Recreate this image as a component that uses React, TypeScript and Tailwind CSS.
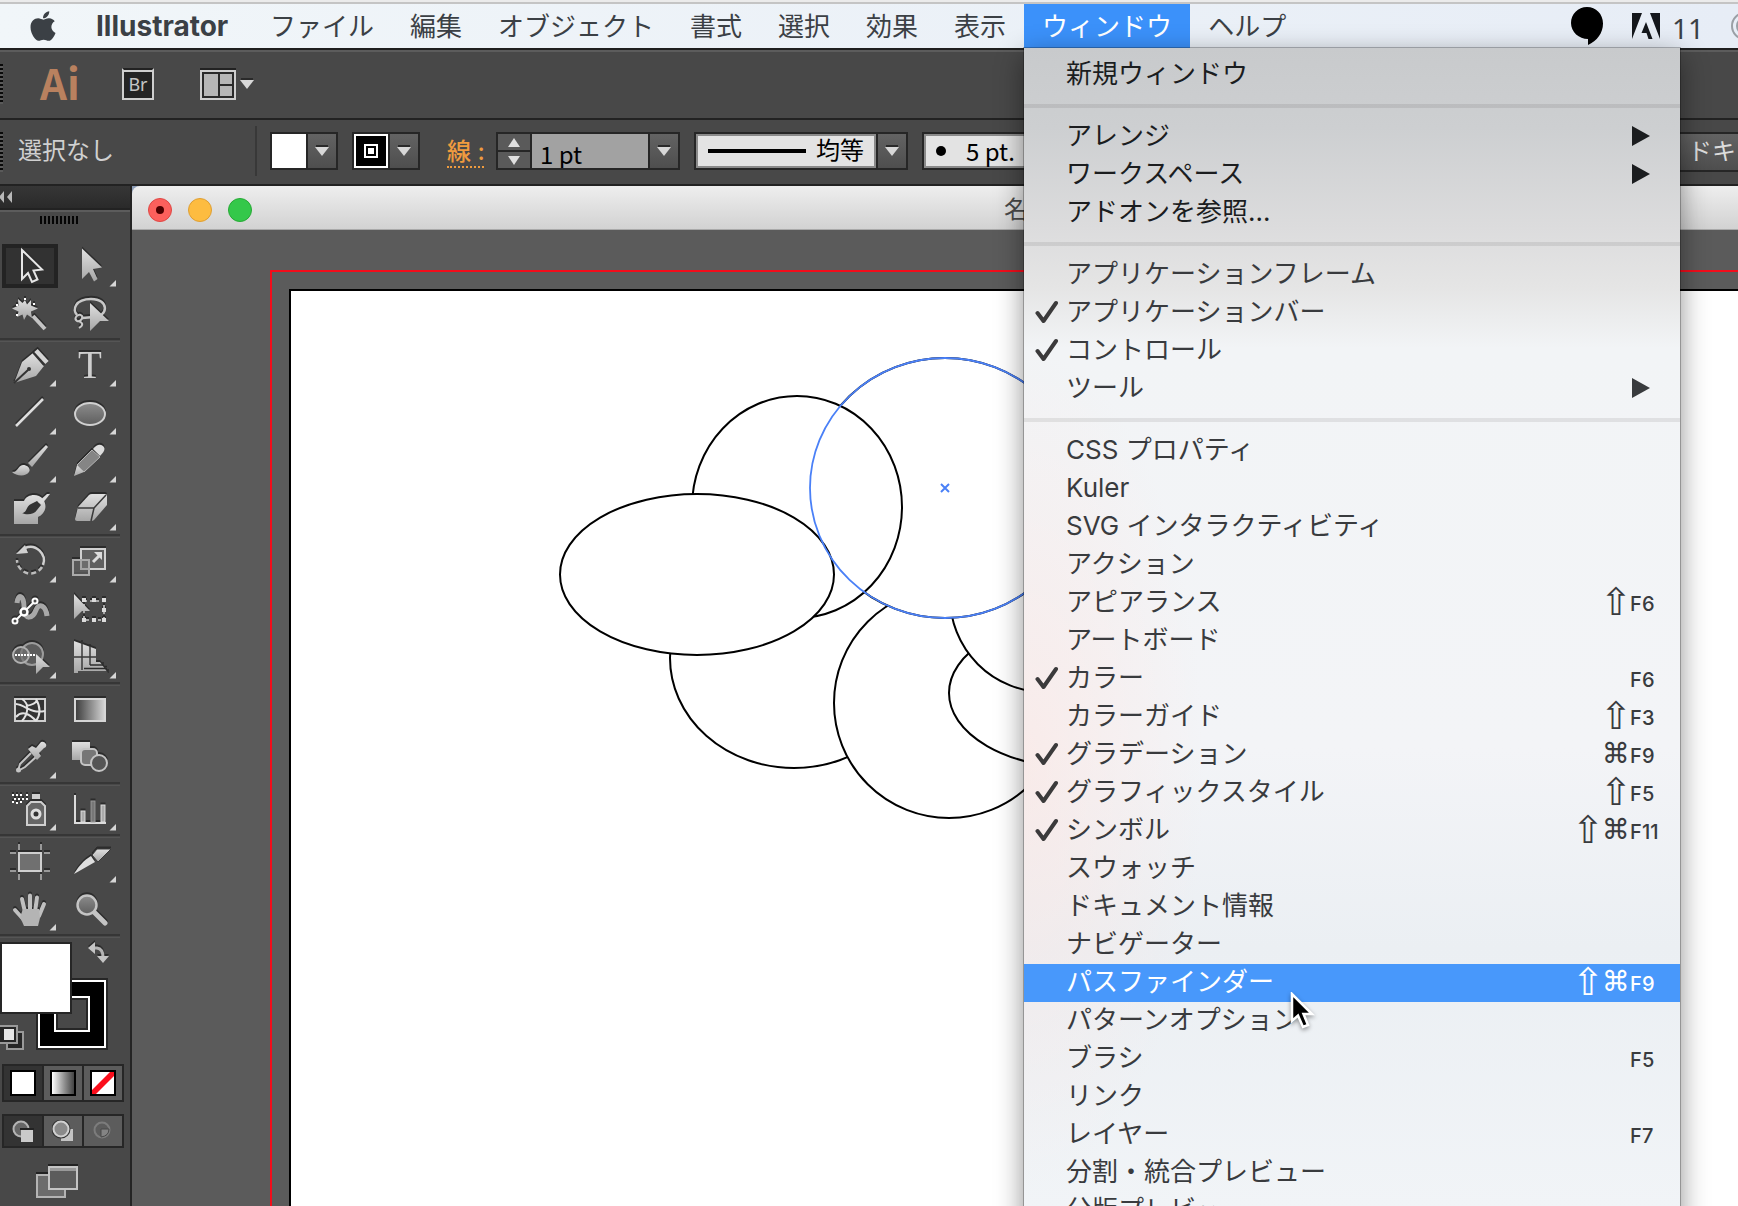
import type { ReactNode } from 'react';
import { FaApple } from 'react-icons/fa';

const METAL = 'url(#metal)';
const PALE = '#d6d6d6';

interface MenuEntry {
  label: string;
  checked?: boolean;
  submenu?: boolean;
  keys?: string[];
  fkey?: string;
  active?: boolean;
}

const MENUS_LEFT = ['ファイル', '編集', 'オブジェクト', '書式', '選択', '効果', '表示'];

const WINDOW_MENU: MenuEntry[][] = [
  [{ label: '新規ウィンドウ' }],
  [
    { label: 'アレンジ', submenu: true },
    { label: 'ワークスペース', submenu: true },
    { label: 'アドオンを参照...' },
  ],
  [
    { label: 'アプリケーションフレーム' },
    { label: 'アプリケーションバー', checked: true },
    { label: 'コントロール', checked: true },
    { label: 'ツール', submenu: true },
  ],
  [
    { label: 'CSS プロパティ' },
    { label: 'Kuler' },
    { label: 'SVG インタラクティビティ' },
    { label: 'アクション' },
    { label: 'アピアランス', keys: ['⇧'], fkey: 'F6' },
    { label: 'アートボード' },
    { label: 'カラー', checked: true, fkey: 'F6' },
    { label: 'カラーガイド', keys: ['⇧'], fkey: 'F3' },
    { label: 'グラデーション', checked: true, keys: ['⌘'], fkey: 'F9' },
    { label: 'グラフィックスタイル', checked: true, keys: ['⇧'], fkey: 'F5' },
    { label: 'シンボル', checked: true, keys: ['⇧', '⌘'], fkey: 'F11' },
    { label: 'スウォッチ' },
    { label: 'ドキュメント情報' },
    { label: 'ナビゲーター' },
    { label: 'パスファインダー', keys: ['⇧', '⌘'], fkey: 'F9', active: true },
    { label: 'パターンオプション' },
    { label: 'ブラシ', fkey: 'F5' },
    { label: 'リンク' },
    { label: 'レイヤー', fkey: 'F7' },
    { label: '分割・統合プレビュー' },
    { label: '分版プレビュー' },
  ],
];

interface Tool {
  name: string;
  icon: ReactNode;
  flyout?: boolean;
  active?: boolean;
}

// every tool icon is drawn on a 60x48 cell
const TOOL_GROUPS: Tool[][] = [
  [
    {
      name: '選択ツール',
      active: true,
      icon: <path d="M22 8 L42 27.5 L33.5 28.5 L37.5 37.5 L32 40 L28 31 L22 37Z" fill="#303030" stroke="#e6e6e6" strokeWidth="2" />,
    },
    {
      name: 'ダイレクト選択ツール',
      flyout: true,
      icon: <path d="M22 6.5 L42 25.5 L33 27 L37.5 37 L34 39.5 L29 30 L22 37Z" fill={METAL} />,
    },
    {
      name: '自動選択ツール',
      icon: (
        <>
          <path d="M33 26 L45 39" stroke="#c4c4c4" strokeWidth="4" />
          <path d="M25 10 L27 14.5 L31 10 L31 15.5 L38 18.5 L31 21.5 L32 28 L27 24.5 L24 30 L22.500 24.500 L17 27 L18.500 21.500 L12 18.500 L18.500 15.500 L18 9 L22.500 13Z" fill={METAL} />
          <path d="M16 14h2v2h-2z M24 8h2v2h-2z M33 13h2v2h-2z M16 24h2v2h-2z" fill="#fff" />
        </>
      ),
    },
    {
      name: 'なげなわツール',
      icon: (
        <>
          <path d="M17 25 C12 20 15 9 31 9 C50 9 48 27 34 27 L22 28" fill="none" stroke="#c8c8c8" strokeWidth="2.500" />
          <path d="M21 25 C16 24 14 29 17 31 C21 32 24 27 21 25 M17 31 C23 32 24 35 19 38" fill="none" stroke="#c8c8c8" strokeWidth="2" />
          <path d="M30 13 L49 31 H40 L30 41Z" fill={METAL} />
        </>
      ),
    },
  ],
  [
    {
      name: 'ペンツール',
      flyout: true,
      icon: (
        <>
          <path d="M14 41 L22 20 L33 11 L44 24 L36 34Z" fill={METAL} />
          <path d="M14 41 L28 28" stroke="#333" strokeWidth="2" />
          <circle cx="29" cy="27" r="2" fill="#333" />
          <path d="M35 9 L46 21.500" stroke="#333" strokeWidth="7" />
          <path d="M36 8.500 L47 20.500" stroke="#d4d4d4" strokeWidth="4.500" />
        </>
      ),
    },
    {
      name: '文字ツール',
      flyout: true,
      icon: (
        <text x="30" y="36" textAnchor="middle" fontSize="39" fontFamily="Liberation Serif, serif" fill="#cfcfcf">
          T
        </text>
      ),
    },
    {
      name: '直線ツール',
      flyout: true,
      icon: <path d="M16 36 L43 9" stroke="#dedede" strokeWidth="2.500" />,
    },
    {
      name: '楕円形ツール',
      flyout: true,
      icon: <ellipse cx="30" cy="24" rx="15" ry="11" fill="url(#dim)" stroke="#d0d0d0" strokeWidth="2" />,
    },
    {
      name: 'ブラシツール',
      flyout: true,
      icon: (
        <>
          <path d="M12 34 C18 35 17 28 23 27 C28 27 31 31 29 34 C26 39 16 38 12 34Z" fill={METAL} />
          <path d="M28 25 L46 7 L48 9 L32 29Z" fill={METAL} />
        </>
      ),
    },
    {
      name: '鉛筆ツール',
      flyout: true,
      icon: (
        <>
          <path d="M14 38 L17 27 L24 34Z" fill={METAL} />
          <path d="M17 27 L32 12 L40 19 L24 34Z" fill="#858585" stroke="#b5b5b5" strokeWidth="1" />
          <path d="M33 11 C37 6 40 6 43 8 C46 11 44 14 40 18Z" fill="#dcdcdc" />
        </>
      ),
    },
    {
      name: '塗りブラシツール',
      icon: (
        <>
          <path d="M14 15 H24 C27 8 38 7 43 13 C48 20 45 28 38 31 V38 H14Z" fill={METAL} />
          <path d="M22 27 C27 27 26 20 31 18 L37 15 L41 19 L37 24 C34 29 26 29 22 27Z" fill="#333" />
          <path d="M38 16 L47 8 H50 L42 18Z" fill="#dcdcdc" />
        </>
      ),
    },
    {
      name: '消しゴムツール',
      flyout: true,
      icon: (
        <>
          <path d="M18 21 L29 9 Q30 8 32 8 H45 Q47 8 47 10 V19 L34 34 Q33 35 31 35 H17 Q15 35 15 33Z" fill={METAL} />
          <path d="M18 22 H34 L46 9 M34 22 L31 35" fill="none" stroke="#3a3a3a" strokeWidth="1.500" />
        </>
      ),
    },
  ],
  [
    {
      name: '回転ツール',
      flyout: true,
      icon: (
        <>
          <path d="M25 10 A13.500 13.500 0 0 1 43 27" fill="none" stroke="#d0d0d0" strokeWidth="2.500" />
          <path d="M42 29 A13.500 13.500 0 0 1 17 22" fill="none" stroke="#bdbdbd" strokeWidth="2.500" strokeDasharray="5 3" />
          <path d="M16 16 L25 7 L28 15Z" fill="#d0d0d0" />
        </>
      ),
    },
    {
      name: '拡大・縮小ツール',
      flyout: true,
      icon: (
        <>
          <rect x="21" y="11" width="24" height="20" fill="#606060" stroke="#d0d0d0" strokeWidth="2" />
          <rect x="13" y="22" width="16" height="15" fill="#777" fillOpacity=".5" stroke="#aaa" strokeWidth="2" />
          <path d="M33 24 L39 18" stroke="#dcdcdc" strokeWidth="3" />
          <path d="M34 14 H42 V22Z" fill="#dcdcdc" />
        </>
      ),
    },
    {
      name: '線幅ツール',
      flyout: true,
      icon: (
        <>
          <path d="M17 17 C18 7 24 9 24 21 C25 36 33 32 36 24 C39 16 46 20 47 30" fill="none" stroke="#a8a8a8" strokeWidth="5" />
          <path d="M15 35 L35 15" stroke="#fff" strokeWidth="2" />
          <g fill="#4a4a4a" stroke="#fff" strokeWidth="2">
            <circle cx="15" cy="35" r="2.500" />
            <circle cx="35" cy="15" r="2.500" />
            <circle cx="24" cy="26" r="3.500" strokeWidth="2.500" />
          </g>
        </>
      ),
    },
    {
      name: '自由変形ツール',
      icon: (
        <>
          <rect x="24" y="15" width="20" height="19" fill="none" stroke="#a8a8a8" strokeWidth="2" strokeDasharray="3 3" />
          <path d="M22 12h4v4h-4z M32 12h4v4h-4z M42 12h4v4h-4z M42 22h4v4h-4z M42 32h4v4h-4z M32 32h4v4h-4z M22 32h4v4h-4z" fill="#dcdcdc" />
          <path d="M14 8 L30 25 H22 L14 33Z" fill={METAL} />
        </>
      ),
    },
    {
      name: 'シェイプ形成ツール',
      flyout: true,
      icon: (
        <>
          <circle cx="32" cy="20" r="11" fill="#5c5c5c" stroke="#9c9c9c" strokeWidth="2" />
          <circle cx="21" cy="21" r="8" fill="#707070" fillOpacity=".7" stroke="#b0b0b0" strokeWidth="2" />
          <path d="M15 21 H35" stroke="#fff" strokeWidth="2" strokeDasharray="2 1" />
          <path d="M36 20 L50 33 H43 L36 40Z" fill={METAL} />
        </>
      ),
    },
    {
      name: '遠近グリッドツール',
      flyout: true,
      icon: (
        <>
          <path d="M14 7 L36 15 V28 H40 L48 39 H14Z" fill={METAL} />
          <path d="M22 8 V36 M30 12 V31 M14 23 H36" fill="none" stroke="#3a3a3a" strokeWidth="1.500" />
          <path d="M30 31 H44 M24 34.500 H47 M18 38 H49" fill="none" stroke="#2c2c2c" strokeWidth="1.500" />
        </>
      ),
    },
  ],
  [
    {
      name: 'メッシュツール',
      icon: (
        <>
          <rect x="15" y="13" width="30" height="22" fill="#333" stroke="#cfcfcf" strokeWidth="2" />
          <path d="M16 18 C26 19 30 28 45 25 M22 13 C30 18 28 28 22 35 M36 13 C40 20 41 28 36 35 M16 31 C22 24 30 28 36 35 M26 20 C32 19 36 17 37 14" fill="none" stroke="#e2e2e2" strokeWidth="2" />
        </>
      ),
    },
    {
      name: 'グラデーションツール',
      icon: <rect x="15" y="13" width="30" height="22" fill="url(#ramp)" stroke="#d6d6d6" strokeWidth="2" />,
    },
    {
      name: 'スポイトツール',
      flyout: true,
      icon: (
        <>
          <path d="M18 37 L20 30 L31 19" fill="none" stroke="#c4c4c4" strokeWidth="2" />
          <path d="M18 37 L25 33 L36 23" fill="none" stroke="#c4c4c4" strokeWidth="2" />
          <circle cx="18.500" cy="36" r="2.500" fill="#c4c4c4" />
          <path d="M28 15 L32 12 L36 14 L41 8 Q44 7 46 10 Q47 13 44 14 L39 19 L41 22 L37 26Z" fill={METAL} />
        </>
      ),
    },
    {
      name: 'ブレンドツール',
      icon: (
        <>
          <rect x="12" y="8" width="18" height="18" fill={METAL} />
          <rect x="21" y="15" width="16" height="16" rx="4" fill="#777" stroke="#c4c4c4" strokeWidth="2" />
          <circle cx="39" cy="29" r="8" fill="#555" stroke="#c4c4c4" strokeWidth="2" />
        </>
      ),
    },
  ],
  [
    {
      name: 'シンボルスプレーツール',
      flyout: true,
      icon: (
        <>
          <rect x="32" y="8" width="8" height="5" fill="#d0d0d0" />
          <path d="M27 39 V20 L31 16 H41 L45 20 V39Z" fill="#666" stroke="#cfcfcf" strokeWidth="2" />
          <circle cx="36" cy="28" r="4" fill="#333" stroke="#dedede" strokeWidth="3" />
          <path d="M12 8h2v2h-2z M16 8h2v2h-2z M20 8h2v2h-2z M26 8h2v2h-2z M14 12h2v2h-2z M18 12h2v2h-2z M22 12h2v2h-2z M26 12h2v2h-2z M12 15h2v2h-2z M16 16h2v2h-2z M20 15h2v2h-2z" fill="#fff" />
        </>
      ),
    },
    {
      name: '棒グラフツール',
      flyout: true,
      icon: (
        <>
          <path d="M15 9 V37 H46" fill="none" stroke="#dcdcdc" strokeWidth="2" />
          <rect x="21" y="25" width="4" height="11" fill="#aaa" stroke="#ddd" />
          <rect x="31" y="15" width="4" height="21" fill="#777" stroke="#999" />
          <rect x="41" y="19" width="4" height="17" fill="#aaa" stroke="#ddd" />
        </>
      ),
    },
  ],
  [
    {
      name: 'アートボードツール',
      icon: (
        <>
          <path d="M19 6 V12 M41 6 V12 M19 36 V42 M41 36 V42 M10 15 H16 M44 15 H50 M10 33 H16 M44 33 H50" stroke="#9a9a9a" strokeWidth="2" />
          <rect x="19" y="15" width="22" height="18" fill="#707070" stroke="#cfcfcf" strokeWidth="2" />
        </>
      ),
    },
    {
      name: 'スライスツール',
      flyout: true,
      icon: (
        <>
          <path d="M14 36 C18 29 24 22 31 18 L35 24Z" fill="#dedede" />
          <path d="M32 17 L37 11 H51 L38 24Z" fill={METAL} stroke="#3a3a3a" />
        </>
      ),
    },
    {
      name: '手のひらツール',
      flyout: true,
      icon: (
        <>
          <path d="M22 13 L25 26 M30 9.500 V25 M37 11.500 L35 26 M44 18 L39 30 M15 24 L24 34" stroke="#c0c0c0" strokeWidth="4" strokeLinecap="round" />
          <path d="M23 23 H39 L40 32 L38 40 H24 L20 31Z" fill="#b4b4b4" />
        </>
      ),
    },
    {
      name: 'ズームツール',
      icon: (
        <>
          <path d="M35 27 L45 37" stroke="#c4c4c4" strokeWidth="5" strokeLinecap="round" />
          <circle cx="27" cy="19" r="9.500" fill="url(#dim)" stroke="#c4c4c4" strokeWidth="2.500" />
        </>
      ),
    },
  ],
];

function Defs() {
  return (
    <svg className="absolute size-0" aria-hidden="true">
      <defs>
        <linearGradient id="metal" x1="0" y1="0" x2="0" y2="1">
          <stop offset="0" stopColor="#e0e0e0" />
          <stop offset="1" stopColor="#a6a6a6" />
        </linearGradient>
        <linearGradient id="dim" x1="0" y1="0" x2="0" y2="1">
          <stop offset="0" stopColor="#8c8c8c" />
          <stop offset="1" stopColor="#5e5e5e" />
        </linearGradient>
        <linearGradient id="ramp" x1="0" y1="0" x2="1" y2="0">
          <stop offset="0" stopColor="#3a3a3a" />
          <stop offset="1" stopColor="#d6d6d6" />
        </linearGradient>
      </defs>
    </svg>
  );
}

function DownArrow() {
  return (
    <svg width="14" height="12" viewBox="0 0 14 12" className="shrink-0" aria-hidden="true">
      <path d="M1 0 H13 V3 H1Z" fill="#2a2a2a" />
      <path d="M0 2 H14 L7 11Z" fill="#d8d8d8" />
    </svg>
  );
}

function DropButton({ label }: { label: string }) {
  return (
    <button aria-label={label} className="flex w-7 shrink-0 items-center justify-center bg-linear-to-b from-[#636363] to-[#4e4e4e]">
      <DownArrow />
    </button>
  );
}

function Grip() {
  return <div className="h-10 w-[3px] shrink-0 bg-[repeating-linear-gradient(to_bottom,#0a0a0a_0_2px,#5a5a5a_2px_4px)]" />;
}

function MenuRow({ entry }: { entry: MenuEntry }) {
  return (
    <li>
      <button className={`flex h-[38px] w-full items-center pb-0.5 text-left ${entry.active ? 'bg-[#4898fb] text-white' : ''}`}>
        <span className="flex w-[42px] shrink-0 pl-[11px]">
          {entry.checked && (
            <svg width="24" height="24" viewBox="0 0 24 24" fill="none" aria-label="オン">
              <path d="M2.500 13 L8.500 21 L21 3" stroke="#3b3a3b" strokeWidth="4" strokeLinecap="round" strokeLinejoin="round" />
            </svg>
          )}
        </span>
        <span className="whitespace-nowrap">{entry.label}</span>
        {entry.submenu && (
          <svg width="18" height="20" viewBox="0 0 18 20" className="mr-[30px] ml-auto" aria-hidden="true">
            <path d="M0 0 L18 10 L0 20Z" fill="currentColor" />
          </svg>
        )}
        {entry.fkey && (
          <span className="ml-auto flex items-center">
            {entry.keys?.map((key) => (
              <span
                key={key}
                className={`flex w-7 justify-center font-['DejaVu_Sans',sans-serif] leading-8 ${key === '⇧' ? 'text-[38px]' : 'text-[28px]'}`}
              >
                {key}
              </span>
            ))}
            <span className="w-[50px] pt-1 text-xl font-medium">{entry.fkey}</span>
          </span>
        )}
      </button>
    </li>
  );
}

function WindowMenu() {
  return (
    <div className="absolute top-full left-0 z-20 w-[656px] bg-[radial-gradient(ellipse_180px_420px_at_0px_720px,rgba(255,226,220,0.5),transparent),linear-gradient(to_bottom,#c8cacc_0px,#cdcfd1_80px,#dcdcdd_180px,#e5e5e5_240px,#f2f4f6_300px,#f3f4f7_700px,#ebeff3_900px,#f1f4f7_1160px)] pt-2 shadow-[0_0_0_1px_rgba(0,0,0,0.25),0_8px_26px_rgba(0,0,0,0.45)]">
      {WINDOW_MENU.map((section, i) => (
        <ul
          key={i}
          className={`${i > 0 ? 'mt-2.5 border-t-4 border-black/8 pt-2.5' : ''} ${i < 2 ? 'text-[#1b1d1f]' : 'text-[#393b3e]'}`}
        >
          {section.map((entry) => (
            <MenuRow key={entry.label} entry={entry} />
          ))}
        </ul>
      ))}
      {/* mouse pointer */}
      <svg width="30" height="42" viewBox="0 0 30 42" className="absolute top-[944px] left-[266px] drop-shadow-[0_2px_2px_rgba(0,0,0,0.4)]" aria-hidden="true">
        <path d="M2 2 V29 L8 23.500 L13 35 L18 33 L13.500 22 H22Z" fill="#000" stroke="#fff" strokeWidth="2.500" />
      </svg>
    </div>
  );
}

function MenuBar() {
  return (
    <header className="shrink-0">
      <div className="h-1 border-b-2 border-[#c4c4c4] bg-[#ebebeb]" />
      <nav className="flex h-11 items-stretch bg-linear-to-r from-[#f1f6f9] to-[#e7edf6] text-[#3b4045]">
        <button aria-label="アップルメニュー" className="w-20 shrink-0 pl-[26px]">
          <FaApple size={34} />
        </button>
        <button className="w-[172px] shrink-0 pl-4 text-left text-[28px] font-bold">Illustrator</button>
        {MENUS_LEFT.map((menu) => (
          <button key={menu} className="shrink-0 px-[18px] pt-0.5 whitespace-nowrap">
            {menu}
          </button>
        ))}
        <div className="relative flex shrink-0">
          <button className="bg-[#3b91fa] px-[18px] pt-0.5 whitespace-nowrap text-white">ウィンドウ</button>
          <WindowMenu />
        </div>
        <button className="shrink-0 px-[18px] pt-0.5 whitespace-nowrap">ヘルプ</button>
        <div className="ml-auto flex shrink-0 items-center">
          <svg width="32" height="38" viewBox="0 0 32 38" className="mr-[29px]" aria-hidden="true">
            <path d="M16 0 C25 0 32 7 32 16.500 C32 26 26 34 17 38 V32 C8 32 0 25 0 16 C0 7 7 0 16 0Z" fill="#000" />
          </svg>
          <svg width="28" height="26" viewBox="0 0 28 26" aria-hidden="true">
            <path d="M0 0 H10 L0 26Z M28 0 H18 L28 26Z M14 9 L20.500 26 H16.500 L14.500 20 H9.500Z" fill="#14171c" />
          </svg>
          <span className="w-[70px] pt-1 pl-3 font-['Noto_Sans',sans-serif] text-[28px]">11</span>
          <svg width="8" height="30" viewBox="0 0 8 30" aria-hidden="true">
            <circle cx="15" cy="15" r="13" fill="none" stroke="#9a9fa5" strokeWidth="2" />
            <circle cx="15" cy="15" r="8" fill="none" stroke="#9a9fa5" strokeWidth="2" />
          </svg>
        </div>
      </nav>
    </header>
  );
}

function AppBar() {
  return (
    <div className="flex h-[70px] shrink-0 items-center border-t-2 border-[#1f1f1f] bg-[#484848] shadow-[inset_0_2px_0_#5c5c5c]">
      <Grip />
      <span className="ml-[37px] w-[82px] pb-1 font-['Noto_Sans_CJK_JP',sans-serif] text-[42px] leading-[48px] font-bold text-[#b9815f]">
        Ai
      </span>
      <button className="flex h-8 w-8 items-center justify-center border-2 border-t-[#222] border-[#cfcfcf] bg-[#242424] font-['Noto_Sans',sans-serif] text-lg leading-none text-[#c4c4c4] shadow-[inset_0_2px_0_#cfcfcf]">
        Br
      </button>
      <button aria-label="ドキュメントレイアウト" className="ml-[46px] flex items-center gap-1">
        <svg width="36" height="32" viewBox="0 0 36 32" aria-hidden="true">
          <path d="M0 0h36v2H0z" fill="#222" />
          <rect x="1" y="3" width="34" height="28" fill="#2a2a2a" stroke="#cfcfcf" strokeWidth="2" />
          <path d="M4 6h14v22H4z M20 6h12v10H20z M20 18h12v10H20z" fill="#b6b6b6" />
        </svg>
        <DownArrow />
      </button>
    </div>
  );
}

function ControlBar() {
  return (
    <div className="flex h-[68px] shrink-0 items-start overflow-hidden border-y-2 border-[#222] bg-[#484848] pt-3 text-2xl leading-9">
      <Grip />
      <span className="ml-[15px] w-[237px] shrink-0 pt-px whitespace-nowrap text-[#d0d0d0]">選択なし</span>
      <div className="-mt-1.5 h-[50px] w-0.5 shrink-0 bg-[#383838]" />
      <div className="ml-[13px] flex h-[38px] shrink-0 gap-0.5 border-2 border-[#262626] bg-[#262626]">
        <button aria-label="塗り" className="w-[34px] bg-white" />
        <DropButton label="塗りを選択" />
      </div>
      <div className="ml-[14px] flex h-[38px] shrink-0 gap-0.5 border-2 border-[#262626] bg-[#262626]">
        <button aria-label="線" className="flex w-[34px] items-center justify-center border-2 border-white bg-black">
          <svg width="14" height="14" viewBox="0 0 14 14" aria-hidden="true">
            <rect x="1" y="1" width="12" height="12" fill="#000" stroke="#fff" strokeWidth="2" />
            <rect x="4" y="4" width="6" height="6" fill="#fff" />
          </svg>
        </button>
        <DropButton label="線を選択" />
      </div>
      <label htmlFor="stroke-width" className="ml-[27px] h-9 w-[37px] shrink-0 border-b-2 border-dotted border-[#ef9b3f] pt-0.5 font-medium whitespace-nowrap text-[#ef9b3f]">
        線 :
      </label>
      <div className="ml-3 flex h-[38px] shrink-0 gap-0.5 border-2 border-[#262626] bg-[#262626]">
        <div className="flex w-8 flex-col gap-0.5">
          <button aria-label="線幅を増やす" className="flex flex-1 items-center justify-center bg-[#5a5a5a]">
            <svg width="12" height="9" viewBox="0 0 12 9" aria-hidden="true">
              <path d="M0 9 L6 0 L12 9Z" fill="#e0e0e0" />
            </svg>
          </button>
          <button aria-label="線幅を減らす" className="flex flex-1 items-center justify-center bg-[#5a5a5a]">
            <svg width="12" height="9" viewBox="0 0 12 9" aria-hidden="true">
              <path d="M0 0 H12 L6 9Z" fill="#e0e0e0" />
            </svg>
          </button>
        </div>
        <input id="stroke-width" defaultValue="1 pt" className="w-[116px] bg-[#a2a2a2] pt-1.5 pl-2 font-['Noto_Sans_CJK_JP',sans-serif] text-black" />
        <DropButton label="線幅を選択" />
      </div>
      <div className="ml-[14px] flex h-[38px] shrink-0 gap-0.5 border-2 border-[#262626] bg-[#262626]">
        <div className="flex w-[180px] items-center border-2 border-[#8a8a8a] bg-[#e3e3e3] pl-2.5 text-black">
          <div className="mr-2.5 h-1 w-[98px] bg-black" />
          <select aria-label="可変線幅プロファイル" className="w-14 appearance-none leading-8">
            <option>均等</option>
          </select>
        </div>
        <DropButton label="プロファイルを選択" />
      </div>
      <div className="ml-[14px] flex h-[38px] shrink-0 gap-0.5 border-2 border-[#262626] bg-[#262626]">
        <div className="flex w-[180px] items-center border-2 border-[#8a8a8a] bg-[#e3e3e3] pl-2.5 text-black">
          <div className="mr-5 size-2.5 rounded-full bg-black" />
          <select aria-label="ブラシ定義" className="w-28 appearance-none font-['Noto_Sans_CJK_JP',sans-serif] leading-8">
            <option>5 pt.</option>
          </select>
        </div>
        <DropButton label="ブラシを選択" />
      </div>
      <button className="ml-[500px] h-10 shrink-0 border-2 border-[#262626] bg-linear-to-b from-[#636363] to-[#4e4e4e] px-[50px] whitespace-nowrap text-[#dcdcdc]">
        ドキュメント設定
      </button>
    </div>
  );
}

function ToolCell({ tool }: { tool: Tool }) {
  return (
    <button aria-label={tool.name} className="h-12">
      <svg width="60" height="48" viewBox="0 0 60 48" aria-hidden="true">
        {tool.active && <rect x="4" y="4" width="52" height="40" fill="#323232" stroke="#232323" strokeWidth="4" />}
        <g className="drop-shadow-[0_-2px_0_#2c2c2c]">{tool.icon}</g>
        {tool.flyout && <path d="M56 38 V44.500 H49.500Z" fill={PALE} />}
      </svg>
    </button>
  );
}

function FillStroke() {
  return (
    <svg width="124" height="126" viewBox="0 0 124 126" role="img" aria-label="塗りと線">
      {/* stroke swatch */}
      <rect x="36" y="40" width="72" height="72" fill="#262626" />
      <rect x="39" y="43" width="66" height="66" fill="#000" stroke="#fff" strokeWidth="2" />
      <rect x="55" y="59" width="34" height="34" fill="#484848" stroke="#fff" strokeWidth="2" />
      <rect x="57" y="61" width="30" height="30" fill="none" stroke="#262626" strokeWidth="2" />
      {/* fill swatch */}
      <rect x="1" y="5" width="70" height="70" fill="#fff" stroke="#262626" strokeWidth="2" />
      <g className="drop-shadow-[0_-2px_0_#2c2c2c]">
        <path d="M93 10 H97 Q103 11 103 19" fill="none" stroke="#b4b4b4" strokeWidth="3" />
        <path d="M88 10 L95 4 V16Z M97 18 H109 L103 25Z" fill="#c4c4c4" />
      </g>
      <rect x="7" y="94" width="16" height="17" fill="#262626" stroke="#999" strokeWidth="2" />
      <rect x="-3" y="88" width="20" height="17" fill="#262626" stroke="#999" strokeWidth="2" />
      <rect x="4" y="91" width="10" height="11" fill="#e6e6e6" />
    </svg>
  );
}

function ModeButtons() {
  return (
    <>
      <div className="ml-0.5 flex h-[38px] w-[122px] gap-0.5 border-2 border-[#262626] bg-[#262626]">
        <button aria-label="カラー" className="flex flex-1 items-center justify-center bg-[#333]">
          <span className="size-[26px] border-2 border-black bg-white" />
        </button>
        <button aria-label="グラデーション" className="flex flex-1 items-center justify-center bg-[#5c5c5c]">
          <span className="size-[26px] border-2 border-black bg-linear-to-r from-white to-[#444]" />
        </button>
        <button aria-label="なし" className="flex flex-1 items-center justify-center bg-[#5c5c5c]">
          <svg width="26" height="26" viewBox="0 0 26 26" aria-hidden="true">
            <rect x="1" y="1" width="24" height="24" fill="#fff" stroke="#000" strokeWidth="2" />
            <path d="M2 24 V20 L20 2 H24 V6 L6 24Z" fill="#fb0d1b" />
          </svg>
        </button>
      </div>
      <div className="mt-3 ml-0.5 flex h-[34px] w-[122px] gap-0.5 border-2 border-[#262626] bg-[#262626]">
        <button aria-label="標準描画" className="flex flex-1 items-center justify-center bg-[#333]">
          <svg width="22" height="22" viewBox="0 0 22 22" aria-hidden="true">
            <circle cx="9" cy="9" r="7.500" fill="#666" stroke="#b4b4b4" strokeWidth="2" />
            <path d="M8 8h14v2H8z" fill="#222" />
            <rect x="9" y="10" width="12" height="12" fill="#cacaca" />
          </svg>
        </button>
        <button aria-label="背面描画" className="flex flex-1 items-center justify-center bg-[#5c5c5c]">
          <svg width="22" height="22" viewBox="0 0 22 22" aria-hidden="true">
            <rect x="9" y="9" width="12" height="12" fill="#c4c4c4" />
            <circle cx="9" cy="9" r="8" fill="#8a8a8a" stroke="#333" strokeWidth="3" />
            <circle cx="9" cy="9" r="7.500" fill="#8a8a8a" stroke="#d0d0d0" strokeWidth="2" />
          </svg>
        </button>
        <button aria-label="内側描画" className="flex flex-1 items-center justify-center bg-[#5c5c5c]">
          <svg width="22" height="22" viewBox="0 0 22 22" aria-hidden="true">
            <circle cx="10" cy="10" r="7.500" fill="#5c5c5c" stroke="#7c7c7c" strokeWidth="2" />
            <path d="M9 9h8q0 7-8 8z" fill="#848484" stroke="#484848" />
          </svg>
        </button>
      </div>
      <button aria-label="スクリーンモード" className="mt-4 ml-9">
        <svg width="42" height="34" viewBox="0 0 42 34" aria-hidden="true">
          <path d="M0 8h12v2H0z M12 0h30v2H12z" fill="#222" />
          <rect x="1" y="11" width="28" height="22" fill="#6c6c6c" stroke="#b4b4b4" strokeWidth="2" />
          <rect x="13" y="3" width="28" height="22" fill="#5c5c5c" stroke="#c4c4c4" strokeWidth="2" />
          <path d="M14 4h26v3H14z" fill="#999" />
        </svg>
      </button>
    </>
  );
}

function ToolPanel() {
  return (
    <aside className="flex w-[132px] shrink-0 flex-col border-r-2 border-[#242424] bg-[#484848]">
      <div className="flex h-6 shrink-0 items-center border-b-2 border-[#222] bg-linear-to-b from-[#363636] to-[#2a2a2a]">
        <svg width="12" height="12" viewBox="0 0 12 12" aria-hidden="true">
          <path d="M4 0 V12 L-1 6Z M12 0 V12 L7 6Z" fill="#b8b8b8" />
        </svg>
      </div>
      <div className="flex h-8 shrink-0 border-t-2 border-[#5c5c5c] pt-1 pl-10">
        <div className="h-2 w-[38px] bg-[repeating-linear-gradient(to_right,#050505_0_2px,#484848_2px_4px)]" />
      </div>
      {TOOL_GROUPS.map((group, i) => (
        <div key={i} className="w-[120px] shrink-0">
          <div className="grid grid-cols-2">
            {group.map((tool) => (
              <ToolCell key={tool.name} tool={tool} />
            ))}
          </div>
          <div className="h-1 border-t-2 border-b border-t-[#363636] border-b-[#555]" />
        </div>
      ))}
      <FillStroke />
      <ModeButtons />
    </aside>
  );
}

// shapes are listed from back to front
function Artwork() {
  return (
    <svg width="900" height="700" viewBox="291 291 900 700" className="shrink-0" role="img" aria-label="アートワーク">
      <g fill="#fff" stroke="#000" strokeWidth="2">
        <ellipse cx="794" cy="658" rx="124" ry="110" />
        <ellipse cx="949" cy="703" rx="115" ry="115" />
        <ellipse cx="1079" cy="693" rx="130" ry="75" />
        <circle cx="1045" cy="597" r="95" />
        <ellipse cx="945" cy="488" rx="135" ry="130" />
        <ellipse cx="797" cy="507" rx="105" ry="111" />
        <ellipse cx="697" cy="574.500" rx="137" ry="80.500" />
      </g>
      <ellipse cx="945" cy="488" rx="135" ry="130" fill="none" stroke="#4a80f7" strokeWidth="1.800" />
      <path d="M941 484 L949 492 M949 484 L941 492" stroke="#4a80f7" strokeWidth="2" />
    </svg>
  );
}

function DocumentWindow() {
  return (
    <main className="flex min-w-0 flex-1 flex-col overflow-hidden bg-[#8a9ab4]">
      <div className="flex h-11 shrink-0 items-center gap-4 rounded-tl-lg border-b border-[#a9a9a9] bg-linear-to-b from-[#eeeeee] to-[#d2d2d2] pt-1 pl-4">
        <button aria-label="閉じる" className="flex size-6 shrink-0 items-center justify-center rounded-full border border-[#df4744] bg-[#fc605c]">
          <span className="size-2 rounded-full bg-[#4d0000]" />
        </button>
        <button aria-label="しまう" className="size-6 shrink-0 rounded-full border border-[#de9f34] bg-[#fdbc40]" />
        <button aria-label="拡大" className="size-6 shrink-0 rounded-full border border-[#27aa35] bg-[#34c84a]" />
        <h1 className="ml-[736px] text-2xl leading-9 whitespace-nowrap text-[#4a4a4a]">名称未設定-1</h1>
      </div>
      <div className="min-h-0 flex-1 overflow-hidden bg-[#5b5b5b] pt-10 pl-[138px]">
        <div className="h-full border-t-2 border-l-2 border-[#f30d1b] pt-[17px] pl-[17px]">
          <div className="h-full border-t-2 border-l-2 border-black bg-white">
            <Artwork />
          </div>
        </div>
      </div>
    </main>
  );
}

export default function App() {
  return (
    <div className="flex h-screen flex-col overflow-hidden bg-[#484848] font-[Inter,'Noto_Sans_CJK_JP',sans-serif] text-[26px] leading-9">
      <Defs />
      <MenuBar />
      <AppBar />
      <ControlBar />
      <div className="flex min-h-0 flex-1 overflow-hidden">
        <ToolPanel />
        <DocumentWindow />
      </div>
    </div>
  );
}
